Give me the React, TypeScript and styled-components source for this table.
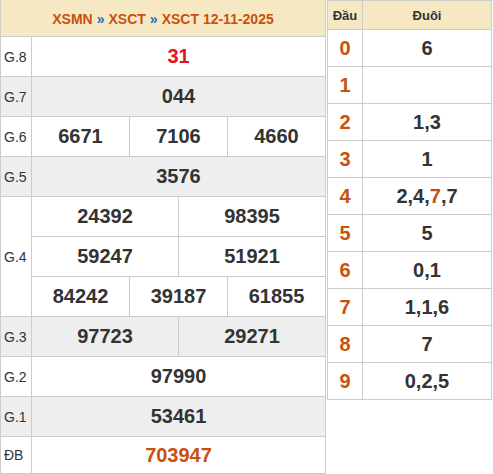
import React from "react";
import styled, { createGlobalStyle } from "styled-components";

const Global = createGlobalStyle`
  html, body { margin: 0; padding: 0; background: #fff; }
  body { font-family: Arial, "Liberation Sans", sans-serif; color: #333; }
  * { box-sizing: border-box; }
`;

const ORANGE = "#c9510c";
const BORDER = "#cccccc";
const BEIGE = "#f6e8c3";

const Page = styled.div`
  display: flex;
  align-items: flex-start;
  gap: 1px;
`;

const Board = styled.div`
  width: 326px;
  border-left: 1px solid ${BORDER};
  border-right: 1px solid ${BORDER};
  border-bottom: 1px solid ${BORDER};
  display: flex;
  flex-direction: column;
`;

const BoardHeader = styled.div`
  height: 37px;
  background: ${BEIGE};
  border-bottom: 1px solid ${BORDER};
  display: flex;
  align-items: center;
  justify-content: center;
  font-weight: bold;
  font-size: 14px;
  color: ${ORANGE};
  padding-top: 1px;
`;

const Sep = styled.span`
  color: #1f6fc5;
  margin: 0 4px;
`;

const Row = styled.div<{ $alt?: boolean; $h?: number }>`
  display: flex;
  height: ${(p) => p.$h ?? 40}px;
  background: ${(p) => (p.$alt ? "#eeeeee" : "#ffffff")};
  border-bottom: 1px solid ${BORDER};
  &:last-child { border-bottom: none; }
`;

const Label = styled.div`
  width: 31px;
  flex: none;
  border-right: 1px solid ${BORDER};
  display: flex;
  align-items: center;
  padding-left: 3px;
  font-size: 14px;
  color: #333;
`;

const Cells = styled.div`
  flex: 1;
  display: flex;
  flex-direction: column;
`;

const SubRow = styled.div`
  flex: 1;
  display: flex;
  & + & { border-top: 1px solid ${BORDER}; }
`;

const Cell = styled.div<{ $color?: string }>`
  flex: 1 1 0;
  display: flex;
  align-items: center;
  justify-content: center;
  font-weight: bold;
  font-size: 20px;
  color: ${(p) => p.$color ?? "#333"};
  & + & { border-left: 1px solid ${BORDER}; }
`;

const Panel = styled.div`
  width: 165px;
  border: 1px solid ${BORDER};
  display: flex;
  flex-direction: column;
`;

const PanelRow = styled.div<{ $head?: boolean }>`
  display: flex;
  height: ${(p) => (p.$head ? 29 : 37)}px;
  background: ${(p) => (p.$head ? BEIGE : "#fff")};
  border-bottom: 1px solid ${BORDER};
  &:last-child { border-bottom: none; height: 36px; }
`;

const HeadCol = styled.div<{ $head?: boolean }>`
  width: 35px;
  flex: none;
  border-right: 1px solid ${BORDER};
  display: flex;
  align-items: center;
  justify-content: center;
  font-weight: bold;
  font-size: ${(p) => (p.$head ? 13 : 20)}px;
  color: ${(p) => (p.$head ? "#333" : ORANGE)};
`;

const TailCol = styled.div<{ $head?: boolean }>`
  flex: 1;
  display: flex;
  align-items: center;
  justify-content: center;
  font-weight: bold;
  font-size: ${(p) => (p.$head ? 13 : 20)}px;
  color: #333;
`;

const Hi = styled.span`
  color: ${ORANGE};
`;

type Prize = { label: string; rows: string[][]; color?: string };

const prizes: Prize[] = [
  { label: "G.8", rows: [["31"]], color: "#e3151a" },
  { label: "G.7", rows: [["044"]] },
  { label: "G.6", rows: [["6671", "7106", "4660"]] },
  { label: "G.5", rows: [["3576"]] },
  {
    label: "G.4",
    rows: [
      ["24392", "98395"],
      ["59247", "51921"],
      ["84242", "39187", "61855"],
    ],
  },
  { label: "G.3", rows: [["97723", "29271"]] },
  { label: "G.2", rows: [["97990"]] },
  { label: "G.1", rows: [["53461"]] },
  { label: "ĐB", rows: [["703947"]], color: ORANGE },
];

const tails: React.ReactNode[] = [
  "6",
  "",
  "1,3",
  "1",
  <>2,4,<Hi>7</Hi>,7</>,
  "5",
  "0,1",
  "1,1,6",
  "7",
  "0,2,5",
];

export default function App() {
  return (
    <>
      <Global />
      <Page>
        <Board>
          <BoardHeader>
            XSMN<Sep>»</Sep>XSCT<Sep>»</Sep>XSCT 12-11-2025
          </BoardHeader>
          {prizes.map((p, i) => (
            <Row
              key={p.label}
              $alt={i % 2 === 1}
              $h={p.label === "ĐB" ? 36 : 40 * p.rows.length}
            >
              <Label>{p.label}</Label>
              <Cells>
                {p.rows.map((r, j) => (
                  <SubRow key={j}>
                    {r.map((n) => (
                      <Cell key={n} $color={p.color}>
                        {n}
                      </Cell>
                    ))}
                  </SubRow>
                ))}
              </Cells>
            </Row>
          ))}
        </Board>
        <Panel>
          <PanelRow $head>
            <HeadCol $head>Đầu</HeadCol>
            <TailCol $head>Đuôi</TailCol>
          </PanelRow>
          {tails.map((t, i) => (
            <PanelRow key={i}>
              <HeadCol>{i}</HeadCol>
              <TailCol>{t}</TailCol>
            </PanelRow>
          ))}
        </Panel>
      </Page>
    </>
  );
}
